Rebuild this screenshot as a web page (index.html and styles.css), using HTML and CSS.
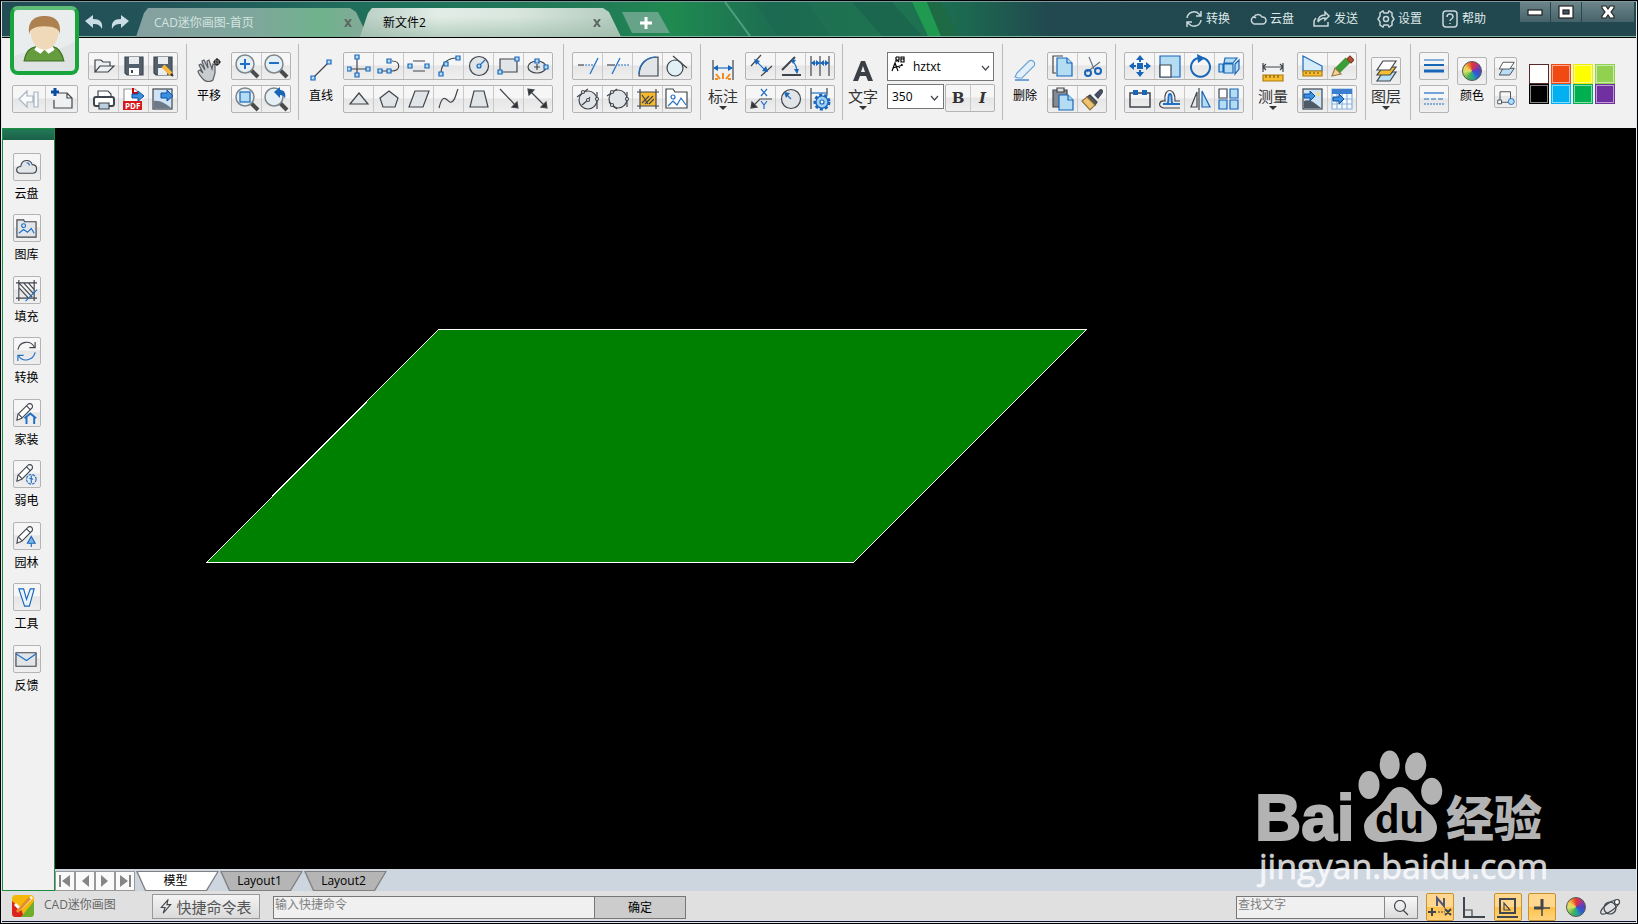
FILE: index.html
```html
<!DOCTYPE html>
<html lang="zh-CN">
<head>
<meta charset="utf-8">
<title>CAD迷你画图</title>
<link rel="stylesheet" href="styles.css">
</head>
<body>
<div class="window">
<header class="titlebar">
  <svg class="streaks" viewBox="0 0 1634 35" preserveAspectRatio="none" aria-hidden="true">
    <path d="M723 0L748 35" stroke="#4f9f7d" stroke-width="2"/>
    <path d="M752 0h52l24 35h-52z" fill="#1b6350" opacity=".3"/>
    <path d="M850 0h40l30 35h-40z" fill="#17554c" opacity=".4"/>
    <path d="M910 0h15l14 35h-13z" fill="#1f9a50"/>
    <path d="M925 0h14l17 35h-17z" fill="#1d6a45"/>
  </svg>
  <div class="history">
    <button aria-label="撤销"><svg viewBox="0 0 18 16"><path d="M0 7L8 1v4c7 0 10 3 9 10-2-4-4-5-9-5v4z"/></svg></button>
    <button aria-label="重做"><svg viewBox="0 0 18 16"><path d="M18 7L10 1v4C3 5 0 8 1 15c2-4 4-5 9-5v4z"/></svg></button>
  </div>
  <div class="doc-tabs">
    <div class="doc-tab home"><span>CAD迷你画图-首页</span><button aria-label="关闭"><svg viewBox="0 0 8 8"><path d="M1 0L7 8M7 0L1 8"/></svg></button></div>
    <div class="doc-tab active"><span>新文件2</span><button aria-label="关闭"><svg viewBox="0 0 8 8"><path d="M1 0L7 8M7 0L1 8"/></svg></button></div>
    <button class="new-tab" aria-label="新建标签"><svg viewBox="0 0 12 12"><path d="M6 0v12M0 6h12"/></svg></button>
  </div>
  <nav class="menu">
    <button><svg viewBox="0 0 18 18"><path d="M2 8a7 7 0 0 1 12-4l2 2M16 1v5h-5M16 10a7 7 0 0 1-12 4l-2-2M2 17v-5h5"/></svg>转换</button>
    <button><svg viewBox="0 0 18 18"><path d="M5 14a4 4 0 0 1-1-7c1 0 2 0 3 1M5 7a4.500 4.500 0 0 1 8 0 3.500 3.500 0 0 1 1 7H5"/></svg>云盘</button>
    <button><svg viewBox="0 0 18 18"><path d="M3 8c-1 1-2 2-2 4v4h14v-4M5 12c0-5 3-7 7-7V2l4 4-4 4V8c-3 0-5 1-7 4"/></svg>发送</button>
    <button><svg viewBox="0 0 18 18"><path d="M6 1l1 2h4l1-2 3 2v3l2 3-2 3v3l-3 2-1-2H7l-1 2-3-2v-3L1 9l2-3V3z"/><circle cx="9" cy="9" r="2.500"/></svg>设置</button>
    <button><svg viewBox="0 0 18 18"><rect x="2" y="1" width="14" height="16" rx="3"/><path d="M6 7c0-4 6-4 6 0 0 2-3 2-3 4M9 13v1"/></svg>帮助</button>
  </nav>
  <div class="win-btns">
    <button aria-label="最小化"><svg viewBox="0 0 18 14"><rect x="2" y="5" width="14" height="5" fill="#fff" stroke="#222"/></svg></button>
    <button aria-label="最大化"><svg viewBox="0 0 18 14"><rect x="2" y="1" width="14" height="12" fill="#fff" stroke="#222"/><rect x="6" y="5" width="6" height="4" fill="#456" stroke="#222"/></svg></button>
    <button class="close" aria-label="关闭窗口"><svg viewBox="0 0 18 14"><path d="M3 1h4l2 3 2-3h4v2l-3 4 3 4v2h-4l-2-3-2 3H3v-2l3-4-3-4z" fill="#fff" stroke="#222"/></svg></button>
  </div>
</header>

<div class="toolbar">
  <section class="start">
    <div class="group wide"><button aria-label="后退"><svg viewBox="0 0 24 24"><path class="pale" d="M2 12l8-8v5h6v6h-6v5zM17 5h4v15h-4z"/></svg></button><button aria-label="新建"><svg viewBox="0 0 24 24"><path class="s" d="M9 6h8l5 5v10H4v-8M17 6v5h5"/><path d="M5 1v8M1 5h8" stroke="#0a4da0" stroke-width="3"/></svg></button></div>
  </section>
  <section class="rows">
    <div class="group"><button aria-label="打开"><svg viewBox="0 0 24 24"><path class="s" d="M3 18V6h6l2 2h7v4M3 18l5-6h14l-6 6z"/></svg></button><button aria-label="保存"><svg viewBox="0 0 24 24"><path d="M3 3h18v18H5l-2-2z" fill="#53606e"/><path d="M7 3h10v7H7z" fill="#e9edf0" stroke="none"/><path d="M7 14h10v7H7z" fill="#fff" stroke="none"/><path d="M10 16v3" stroke-width="2"/></svg></button><button aria-label="另存为"><svg viewBox="0 0 24 24"><path d="M3 3h18v18H5l-2-2z" fill="#53606e"/><path d="M7 3h10v7H7zM7 14h9v7H7z" fill="#e9edf0" stroke="none"/><path d="M12 12l8 8" stroke="#f6b53b" stroke-width="4"/><path d="M20 20l2 2" stroke="#333" stroke-width="2"/></svg></button></div>
    <div class="group"><button aria-label="打印"><svg viewBox="0 0 24 24"><path class="w" d="M6 11V4h10l3 3v4"/><rect x="2" y="10" width="20" height="9" rx="2" fill="#fff" stroke-width="2"/><path d="M7 16h10v6H7z" fill="#bcd0e0"/></svg></button><button aria-label="导出PDF"><svg viewBox="0 0 24 24"><path class="w" d="M2 14V2h11l4 4v8" stroke="#999"/><path d="M11 1v5h5" stroke="#c00" stroke-width="2"/><path class="arrow" d="M10 7h6V4l6 5-6 5v-3h-6z"/><rect x="1" y="14" width="19" height="9" fill="#d8171d" stroke="none"/><text x="3" y="22" font-size="8" font-weight="700" fill="#fff">PDF</text></svg></button><button aria-label="导出图片"><svg viewBox="0 0 24 24"><rect x="2" y="2" width="19" height="20" fill="#cfe5f7"/><path d="M3 14c6-1 12 3 17 7H3z" fill="#6d7986" stroke="none"/><path class="arrow" d="M10 6h6V3l6 6-6 5v-3h-6z"/></svg></button></div>
  </section>
  <i class="sep"></i>
  <button class="tool"><svg viewBox="0 0 24 24"><path d="M7 22c-3-3-6-7-6-9l2-1 3 3-4-8 2-1 4 6-3-9 2-1 4 8-1-7 2-1 3 9 1-5 2 1v8l-2 7c-2 2-7 2-9 0z" fill="#c9cccf" stroke="#5a5f66"/><path d="M20 0v8M16 4h8" stroke="#222"/><circle cx="20" cy="4" r="2.500" stroke="#222"/></svg><span>平移</span></button>
  <section class="rows tight">
    <div class="group"><button aria-label="放大"><svg class="mag" viewBox="0 0 26 26"><path class="hd" d="M17 17l7 7"/><circle cx="11" cy="11" r="9"/><path class="bl" d="M11 6v10M6 11h10"/></svg></button><button aria-label="缩小"><svg class="mag" viewBox="0 0 26 26"><path class="hd" d="M17 17l7 7"/><circle cx="11" cy="11" r="9"/><path class="bl" d="M6 10h10"/></svg></button></div>
    <div class="group"><button aria-label="窗口缩放"><svg class="mag" viewBox="0 0 26 26"><path class="hd" d="M17 17l7 7"/><circle cx="11" cy="11" r="9"/><rect x="6" y="6" width="10" height="10" class="n"/></svg></button><button aria-label="上一视图"><svg class="mag" viewBox="0 0 26 26"><path class="hd" d="M17 17l7 7"/><circle cx="11" cy="11" r="9"/><path d="M11 6l6-5v3c5 0 6 4 5 9-1-3-2-4-5-4v3z" fill="#1866ba" stroke="none"/></svg></button></div>
  </section>
  <i class="sep"></i>
  <button class="tool"><svg viewBox="0 0 24 24"><path d="M5 19L19 5"/><path class="n" d="M2 18h4v4H2zM18 2h4v4h-4z"/></svg><span>直线</span></button>
  <section class="rows loose">
    <div class="group"><button aria-label="多线"><svg viewBox="0 0 24 24"><path d="M10 4v16M3 15h19"/><path class="n" d="M8 1h4v4H8zM0 13h4v4H0zM19 13h4v4h-4zM8 19h4v4H8z"/></svg></button><button aria-label="多段线"><svg viewBox="0 0 24 24"><path d="M3 17h12c9 0 9-10 0-10"/><path class="n" d="M1 15h4v4H1zM10 15h4v4h-4zM10 5h4v4h-4z"/></svg></button><button aria-label="双线"><svg viewBox="0 0 24 24"><path d="M6 7h12M6 17h12"/><path class="n" d="M1 10h4v4H1zM18 10h4v4h-4z"/></svg></button><button aria-label="圆弧"><svg viewBox="0 0 24 24"><path d="M4 20C4 10 10 4 20 4"/><path class="n" d="M2 18h4v4H2zM7 8h4v4H7zM19 2h4v4h-4z"/></svg></button><button aria-label="圆"><svg viewBox="0 0 24 24"><circle class="f" cx="12" cy="12" r="9.500"/><path class="bl" d="M12 12l6-6"/><circle class="n" cx="12" cy="12" r="2"/></svg></button><button aria-label="矩形"><svg viewBox="0 0 24 24"><path class="f" d="M3 5h17v13H3z"/><path class="n" d="M1 16h4v4H1zM18 3h4v4h-4z"/></svg></button><button aria-label="椭圆"><svg viewBox="0 0 24 24"><ellipse class="f" cx="11" cy="13" rx="9" ry="6"/><path d="M11 10v6M8 13h6"/><path class="n" d="M9 5h4v4H9zM18 11h4v4h-4z"/></svg></button></div>
    <div class="group"><button aria-label="三角形"><svg viewBox="0 0 24 24"><path class="f" d="M12 6l9 11H3z"/></svg></button><button aria-label="多边形"><svg viewBox="0 0 24 24"><path class="f" d="M12 4l9 7-3 9H6l-3-9z"/></svg></button><button aria-label="平行四边形"><svg viewBox="0 0 24 24"><path class="f" d="M8 4h14l-6 16H2z"/></svg></button><button aria-label="样条曲线"><svg viewBox="0 0 24 24"><path d="M2 21c2-8 4-11 7-9s4 5 7 2 3-8 5-12"/></svg></button><button aria-label="梯形"><svg viewBox="0 0 24 24"><path class="f" d="M7 4h10l4 16H3z"/></svg></button><button aria-label="箭头"><svg viewBox="0 0 24 24"><path d="M3 2l17 18"/><path d="M21 21l-6-1 5-5z" fill="#333"/></svg></button><button aria-label="双向箭头"><svg viewBox="0 0 24 24"><path d="M4 4l16 16"/><path d="M2 2l6 1-5 5zM21 21l-6-1 5-5z" fill="#333"/></svg></button></div>
  </section>
  <i class="sep"></i>
  <section class="rows gap-before">
    <div class="group"><button aria-label="修剪"><svg viewBox="0 0 24 24"><path d="M2 11h6"/><path class="bl" d="M9 11h9" stroke-dasharray="2 1"/><path class="bl" d="M22 4l-8 16"/></svg></button><button aria-label="延伸"><svg viewBox="0 0 24 24"><path d="M1 11h8"/><path class="bl" d="M12 11h12" stroke-dasharray="2 1"/><path class="bl" d="M14 4L6 20"/></svg></button><button aria-label="圆角"><svg viewBox="0 0 24 24"><path class="f" d="M3 22C3 10 10 3 22 3v19z"/><path class="bl" d="M3 20C3 10 10 3 20 3"/></svg></button><button aria-label="相切"><svg viewBox="0 0 24 24"><circle cx="10" cy="14" r="8" fill="#e0f0f4"/><path d="M8 2l14 12"/></svg></button></div>
    <div class="group"><button aria-label="圆心标注"><svg viewBox="0 0 24 24"><circle class="f" cx="12" cy="13" r="9"/><path d="M1 10L12 2M21 5v17M6 18l6-5 2-3"/><circle class="w" cx="7" cy="5" r="1.500"/><circle class="w" cx="12" cy="13" r="1.500"/><circle class="w" cx="21" cy="12" r="1.500"/></svg></button><button aria-label="三切圆"><svg viewBox="0 0 24 24"><circle class="f" cx="12" cy="12" r="9"/><path d="M1 9l10-7M21 5v15M3 15l8 7"/><circle class="w" cx="6" cy="5" r="1.500"/><circle class="w" cx="21" cy="12" r="1.500"/><circle class="w" cx="6" cy="18" r="1.500"/></svg></button><button aria-label="填充图案"><svg viewBox="0 0 24 24"><rect x="4" y="5" width="16" height="14" fill="#f7b92e" stroke="none"/><path d="M1 5h22M1 19h22M4 2v20M20 2v20M6 16l7-7M9 17l8-8M13 17l5-5M6 8l6 9"/></svg></button><button aria-label="插入图片"><svg viewBox="0 0 24 24"><path class="w" d="M1 21V2h7l2 3h12v16z"/><circle class="bl" cx="8" cy="10" r="2"/><path class="bl" d="M3 19l5-5 4 4 4-7 5 7"/></svg></button></div>
  </section>
  <i class="sep"></i>
  <button class="tool big"><svg viewBox="0 0 24 24"><path d="M2 2v20M22 2v20"/><path d="M3 10h18" class="bl"/><path d="M2 10l5-3v6zM22 10l-5-3v6z" fill="#1866ba" stroke="none"/><path d="M12 21v-6M9 21l-4-5M15 21l4-5M7 21H4M17 21h3" stroke="#f28a1d" stroke-width="2"/></svg><span>标注</span></button>
  <section class="rows tight">
    <div class="group"><button aria-label="对齐标注"><svg viewBox="0 0 24 24"><path d="M2 12L12 1M12 22l11-10"/><path class="bl" d="M8 8l8 8"/><path d="M5 5l6 2-4 4zM19 18l-6-1 4-5z" fill="#1866ba" stroke="none"/></svg></button><button aria-label="角度标注"><svg viewBox="0 0 24 24"><path d="M3 21h19M3 16L16 3" stroke-width="2"/><path class="bl" d="M13 7c4 3 5 7 5 12"/><path d="M12 5l5 1-3 4zM18 20l-3-5h5z" fill="#1866ba" stroke="none"/></svg></button><button aria-label="连续标注"><svg viewBox="0 0 24 24"><path d="M3 2v20M12 2v20M21 2v20"/><path class="bl" d="M3 9h18"/><path d="M3 9l4-3v6zM12 9L8 6v6zM12 9l4-3v6zM21 9l-4-3v6z" fill="#1866ba" stroke="none"/></svg></button></div>
    <div class="group"><button aria-label="坐标标注"><svg viewBox="0 0 24 24"><path d="M4 19l7-7h12"/><path d="M2 21l1-6 5 5z" fill="#333"/><path class="bl" d="M12 2l6 7M18 2l-6 7M12 14l3 4 3-4M15 18v4"/></svg></button><button aria-label="半径标注"><svg viewBox="0 0 24 24"><circle class="f" cx="12" cy="12" r="9.500"/><path class="bl" d="M12 12L7 7"/><path d="M5 5l6 1-4 5z" fill="#1866ba" stroke="none"/></svg></button><button aria-label="标注设置"><svg viewBox="0 0 24 24"><path d="M3 1v21M19 1v7"/><path class="bl" d="M3 6h16"/><circle cx="14" cy="15" r="7" fill="#9fd0f2" stroke="#1866ba" stroke-width="3" stroke-dasharray="3 2"/><circle cx="14" cy="15" r="6" fill="#9fd0f2" stroke="#1866ba"/><circle cx="14" cy="15" r="2" fill="#fff" stroke="#1866ba"/></svg></button></div>
  </section>
  <i class="sep"></i>
  <button class="tool big text-tool"><svg viewBox="0 0 24 24"><path d="M2 23L10 3h4l8 20h-5l-2-5H9l-2 5zM10 14h4l-2-6z" fill="#3b4046" stroke="none"/></svg><span>文字</span></button>
  <section class="fonts">
    <div class="pick"><svg class="glyph" viewBox="0 0 16 16"><path d="M1 15l3-8 3 8M2 12l10-3M5 1v5M5 1h3v3H5M8 6L6 4M10 1v5h3V1zM10 3h3M11 8l-3 4"/></svg><select aria-label="字体"><option>hztxt</option></select><svg class="chev" viewBox="0 0 9 6"><path d="M1 1l3.500 4L8 1"/></svg></div>
    <div class="row">
      <div class="pick small"><select aria-label="字号"><option>350</option></select><svg class="chev" viewBox="0 0 9 6"><path d="M1 1l3.500 4L8 1"/></svg></div>
      <div class="group style"><button class="bold">B</button><button class="ital">I</button></div>
    </div>
  </section>
  <i class="sep"></i>
  <button class="tool"><svg viewBox="0 0 24 24"><path d="M4 15L16 3c3-2 7 1 5 5L9 20H5l-3-1z" fill="#e3effa" stroke="#6ea4d3"/><path class="bl" d="M2 22h14"/></svg><span>删除</span></button>
  <section class="rows">
    <div class="group"><button aria-label="复制"><svg viewBox="0 0 24 24"><path d="M12 2H2v17h3"/><path class="n" d="M6 4h10l5 5v13H6z"/><path class="n" d="M16 4v5h5"/></svg></button><button aria-label="剪切"><svg viewBox="0 0 24 24"><path d="M9 3l5 12M20 8L7 18" stroke="#6a7480"/><circle cx="8" cy="19" r="3" stroke="#1866ba" stroke-width="2"/><circle cx="18" cy="17" r="3" stroke="#1866ba" stroke-width="2"/></svg></button></div>
    <div class="group"><button aria-label="粘贴"><svg viewBox="0 0 24 24"><path d="M2 3h14v17H2z" fill="#858b90"/><path d="M6 1h7v4H6z" fill="#ddd"/><path class="n" d="M8 8h9l5 5v10H8z"/><path class="n" d="M17 8v5h5"/></svg></button><button aria-label="格式刷"><svg viewBox="0 0 24 24"><path d="M15 8l5-5c2-1 3 1 2 3l-4 5z" fill="#435072"/><path d="M10 8l7 7-2 3-8-8z" fill="#555"/><path d="M7 10l8 8-5 5-8-9z" fill="#efc471" stroke="#907040"/></svg></button></div>
  </section>
  <i class="sep"></i>
  <section class="rows gap-before">
    <div class="group"><button aria-label="移动"><svg viewBox="0 0 24 24"><path d="M12 1l4 5H8zM12 23l4-5H8zM1 12l5-4v8zM23 12l-5-4v8zM9 9h6v6H9zM11 6h2v2h-2zM11 16h2v2h-2zM6 11h2v2H6zM16 11h2v2h-2z" fill="#1866ba" stroke="none"/></svg></button><button aria-label="缩放"><svg viewBox="0 0 24 24"><path class="n" d="M2 2h20v21H2z"/><path class="w" d="M2 11h11v12H2z"/></svg></button><button aria-label="旋转"><svg viewBox="0 0 24 24"><path d="M15 4a9.500 9.500 0 1 1-5 0" stroke="#1866ba" stroke-width="2"/><path d="M9 0l8 4-7 5z" fill="#1866ba" stroke="none"/></svg></button><button aria-label="三维"><svg viewBox="0 0 24 24"><path class="n" d="M7 10h9v9H7zM8 4h12l-4 5H7zM18 10l4-4v9l-4 5zM2 10h4v8H2z"/></svg></button></div>
    <div class="group"><button aria-label="打断"><svg viewBox="0 0 24 24"><path d="M5 6H2v14h20V6h-3M10 6h4" stroke-width="1.500"/><path d="M5 3h5v5H5zM14 3h5v5h-5z" fill="#1866ba" stroke="none"/></svg></button><button aria-label="偏移"><svg viewBox="0 0 24 24"><path d="M22 21H6c-7-1-5-8 1-7-2-14 11-14 10 0h5"/><path class="bl" d="M22 17H5M9 17c3-2 0-10 3-10s0 8 3 10" stroke-width="2"/></svg></button><button aria-label="镜像"><svg viewBox="0 0 24 24"><path d="M9 5v15H3z"/><path class="n" d="M14 4l8 16h-8z"/><path d="M11 1v22"/></svg></button><button aria-label="阵列"><svg viewBox="0 0 24 24"><path class="w" d="M2 2h8v9H2z"/><path class="n" d="M13 2h8v9h-8zM2 13h8v9H2zM13 13h8v9h-8z"/></svg></button></div>
  </section>
  <i class="sep"></i>
  <button class="tool big text-tool"><svg viewBox="0 0 24 24"><path d="M2 5v9M22 5v9M2 9h20M5 6L2 9l3 3M19 6l3 3-3 3"/><path d="M2 17h20v6H2z" fill="#f7bf2e" stroke="#b07a10"/><path d="M5 17v3M9 17v3M13 17v3M17 17v3" stroke="#805a10"/></svg><span>测量</span></button>
  <section class="rows">
    <div class="group"><button aria-label="面积"><svg viewBox="0 0 24 24"><path d="M2 2l19 10v5H2z" fill="#d6ebf9" stroke="#1866ba"/><path d="M2 17h19v5H2z" fill="#f7bf2e" stroke="#b07a10"/><path d="M5 18v2M9 18v2M13 18v2M17 18v2" stroke="#805a10"/></svg></button><button aria-label="标记"><svg viewBox="0 0 24 24"><path d="M7 17L18 6" stroke="#3c9c35" stroke-width="7"/><path d="M2 22l3-8 6 6z" fill="#f4d39a" stroke="#9a7a40"/><path d="M17 5l3-3 4 4-3 3z" fill="#b3543a" stroke="#8a3a22"/></svg></button></div>
    <div class="group"><button aria-label="插入图像"><svg viewBox="0 0 24 24"><rect x="2" y="2" width="19" height="20" fill="#cfe5f7"/><circle cx="17" cy="7" r="2" fill="#f6de8c" stroke="none"/><path d="M3 14c6-3 12 3 17 7H3z" fill="#4f5965" stroke="none"/><path class="arrow" d="M3 7h6V4l5 5-5 5v-3H3z"/></svg></button><button aria-label="插入表格"><svg viewBox="0 0 24 24"><path d="M2 2h20v20H2z" fill="#f5faff" stroke="#8ab2dc"/><path d="M2 2h20v5H2z" fill="#3c7fd0" stroke="none"/><path d="M2 12h20M2 17h20M7 7v15M12 7v15M17 7v15" stroke="#8ab2dc"/><path class="arrow" d="M3 10h6V7l5 5-5 5v-3H3z"/></svg></button></div>
  </section>
  <i class="sep"></i>
  <button class="tool big boxed text-tool"><b><svg viewBox="0 0 24 24"><path d="M9 13h13l-6 9H3z" fill="#b9dff5"/><path d="M9 8h13l-6 8H3z" fill="#f7bf2e"/><path class="w" d="M9 2h13l-6 9H3z"/></svg></b><span>图层</span></button>
  <i class="sep"></i>
  <section class="rows gap-before">
    <div class="group"><button aria-label="线宽"><svg viewBox="0 0 24 24"><path d="M2 6h20" stroke="#1866ba" stroke-width="1"/><path d="M2 11h20" stroke="#1866ba" stroke-width="2"/><path d="M2 17h20" stroke="#1866ba" stroke-width="3"/></svg></button></div>
    <div class="group"><button aria-label="线型"><svg viewBox="0 0 24 24"><path d="M2 6h20" class="bl"/><path d="M2 12h20" class="bl" stroke-dasharray="5 2"/><path d="M2 17h20" class="bl" stroke-dasharray="2 1"/></svg></button></div>
  </section>
  <button class="tool boxed colour"><b><i class="wheel"></i></b><span>颜色</span></button>
  <section class="minis">
    <div class="group"><button aria-label="图层匹配"><svg viewBox="0 0 24 24"><path d="M8 11h15l-6 9H3z" fill="#b9dff5"/><path class="w" d="M8 3h15l-6 9H3z"/></svg></button></div>
    <div class="group"><button aria-label="对象属性"><svg viewBox="0 0 24 24"><path d="M4 16V5h14v10M5 19h10"/><path class="w" d="M1 16h5v5H1z"/><circle class="n" cx="19" cy="18" r="4"/></svg></button></div>
  </section>
  <div class="palette">
    <button class="c-white" aria-label="白"></button><button class="c-red" aria-label="红"></button><button class="c-yellow" aria-label="黄"></button><button class="c-lime" aria-label="浅绿"></button>
    <button class="c-black" aria-label="黑"></button><button class="c-blue" aria-label="蓝"></button><button class="c-green" aria-label="绿"></button><button class="c-purple" aria-label="紫"></button>
  </div>
</div>

<button class="avatar" aria-label="用户"><svg viewBox="0 0 60 60"><path d="M0 0h60v30C42 46 16 36 0 46z" fill="#fff" opacity=".35"/><path d="M10 50c2-10 6-13 12-14h16c6 1 9 5 11 14z" fill="#659c3d" stroke="#3f7426"/><path d="M20 39l3-5h14l3 5-6 4-4-4-4 4z" fill="#fff"/><path d="M16 18c0-8 28-8 28 0 0 12-5 21-14 21S16 30 16 18z" fill="#efd9b8"/><path d="M15 24C13 11 20 6 30 6s17 5 15 18c0-5-5-8-15-8-10 0-15 3-15 8z" fill="#ad8150"/></svg></button>

<main class="workspace">
  <aside class="sidebar">
    <div class="side-head"></div>
    <ul>
      <li><button><b><svg viewBox="0 0 24 24"><path class="f" d="M5 18c-5-1-4-7 1-7 1-8 10-8 12-2 6 0 6 9 0 9z"/><path class="bl" d="M12 7c2 0 3 1 3 3"/></svg></b><span>云盘</span></button></li>
      <li><button><b><svg viewBox="0 0 24 24"><path class="f" d="M2 21V3h7l1 2h12v16z"/><circle class="bl" cx="9" cy="9" r="2"/><path class="bl" d="M4 17l5-4 4 3 4-4 3 5"/></svg></b><span>图库</span></button></li>
      <li><button><b><svg viewBox="0 0 24 24"><path d="M1 4h22M1 20h22M4 1v22M20 1v22M4 9l10 11M4 4l14 15M9 4l11 12M14 4l6 7"/><path class="bl" d="M11 23L23 11"/></svg></b><span>填充</span></button></li>
      <li><button><b><svg viewBox="0 0 24 24"><path d="M3 10c2-9 13-10 17-3M21 2v6h-6"/><path class="bl" d="M21 13c-2 9-13 10-17 4M3 22v-6h6"/></svg></b><span>转换</span></button></li>
      <li><button><b><svg viewBox="0 0 24 24"><path class="w" d="M3 13L14 2c3-1 5 1 4 4L7 17l-5 2zM12 4l4 4M4 13l3 3"/><path class="bl" d="M10 17l6-5 6 5M12 16v7M20 16v7" stroke-width="2"/></svg></b><span>家装</span></button></li>
      <li><button><b><svg viewBox="0 0 24 24"><path class="w" d="M3 13L14 2c3-1 5 1 4 4L7 17l-5 2zM12 4l4 4M4 13l3 3"/><circle class="bl" cx="17" cy="17" r="5" stroke-dasharray="3 1"/><path class="bl" d="M17 13v8M15 16l4 1"/></svg></b><span>弱电</span></button></li>
      <li><button><b><svg viewBox="0 0 24 24"><path class="w" d="M3 13L14 2c3-1 5 1 4 4L7 17l-5 2zM12 4l4 4M4 13l3 3"/><path d="M17 12l4 7h-8z" fill="#7db8ea" stroke="#1866ba"/><path class="bl" d="M17 19v4"/></svg></b><span>园林</span></button></li>
      <li><button><b><svg viewBox="0 0 24 24"><path d="M4 3h5l3 11 4-11h4l-5 18h-5z" fill="#eaf4fc" stroke="#1866ba"/></svg></b><span>工具</span></button></li>
      <li><button><b><svg viewBox="0 0 24 24"><path class="f" d="M1 5h21v14H1z"/><path class="bl" d="M1 6l11 7 10-7"/></svg></b><span>反馈</span></button></li>
    </ul>
  </aside>
  <div class="sheet">
    <div class="canvas">
      <svg width="1100" height="500" viewBox="0 0 1100 500" role="img" aria-label="平行四边形" shape-rendering="crispEdges">
        <path d="M383.500 201.500H1031.500L798.500 434.500H151.500Z" fill="#008000" stroke="#fff" stroke-width="1"/>
      </svg>
    </div>
    <div class="layouts">
      <div class="pager">
        <button aria-label="第一个"><svg viewBox="0 0 12 12"><path d="M0 0h2v12H0zM11 0v12L3 6z"/></svg></button><button aria-label="上一个"><svg viewBox="0 0 12 12"><path d="M10 0v12L3 6z"/></svg></button><button aria-label="下一个"><svg viewBox="0 0 12 12"><path d="M2 0v12l7-6z"/></svg></button><button aria-label="最后一个"><svg viewBox="0 0 12 12"><path d="M1 0v12l8-6zM10 0h2v12h-2z"/></svg></button>
      </div>
      <button class="layout current"><span>模型</span></button>
      <button class="layout"><span>Layout1</span></button>
      <button class="layout"><span>Layout2</span></button>
    </div>
  </div>
  <svg class="mark" width="300" height="146" viewBox="0 0 300 146" aria-label="Baidu经验 jingyan.baidu.com">
    <g fill="#b3b3b3">
      <text x="0" y="95" class="bai">Bai</text>
      <ellipse cx="114" cy="40" rx="10.500" ry="14"/><ellipse cx="134.700" cy="19.700" rx="10" ry="14.300"/><ellipse cx="160.700" cy="21.300" rx="10.500" ry="14" transform="rotate(8 160 21)"/><ellipse cx="176.700" cy="46.300" rx="10.500" ry="13.500"/>
      <path d="M145 42c8 0 12 7 17 14 7 9 19 14 20 26 0 10-7 15-17 15-7 0-13-2-20-2s-12 2-19 2c-10 0-17-5-17-16 1-11 13-15 20-25 5-7 8-14 16-14z"/>
      <text x="191" y="91" class="exp">经验</text>
    </g>
    <text x="120" y="88" class="du">du</text>
    <text x="4" y="134" class="url">jingyan.baidu.com</text>
  </svg>
</main>

<footer class="status">
  <div class="brand"><svg viewBox="0 0 24 24"><rect x="1" y="1" width="22" height="22" rx="4" fill="#f5b80a"/><path d="M1 7l9 8 3 8H5c-3 0-4-1-4-4z" fill="#d9251d"/><path d="M23 7v12c0 3-1 4-4 4h-9z" fill="#6fae2c"/><path d="M4 10l5 5L21 3" fill="none" stroke="#fff" stroke-width="3"/><path d="M6 18L19 4" stroke="#e58c2b" stroke-width="3"/></svg><span>CAD迷你画图</span></div>
  <button class="cmd-list"><svg viewBox="0 0 12 16"><path d="M8 1L1 9h4l-2 6 8-9H7z"/></svg>快捷命令表</button>
  <form class="cmd"><input type="text" aria-label="快捷命令" placeholder="输入快捷命令"><button type="button">确定</button></form>
  <form class="find"><input type="text" aria-label="查找文字" placeholder="查找文字"><button type="button" aria-label="查找"><svg viewBox="0 0 16 16"><circle cx="7" cy="6" r="5.500"/><path d="M10 10l5 5"/></svg></button></form>
  <div class="modes">
    <button class="on" aria-label="捕捉"><svg viewBox="0 0 26 26"><path d="M10 12V4l7 8V4" stroke="#557" stroke-width="2"/><path d="M1 18h8M5 14v8M18 15l6 6M24 15l-6 6" stroke-width="2"/><path d="M11 18h7" stroke-dasharray="2 1"/></svg></button>
    <button aria-label="正交"><svg viewBox="0 0 26 26"><path d="M3 3v20h21" stroke-width="2"/><path d="M4 16h7v7"/></svg></button>
    <button class="on" aria-label="线宽显示"><svg viewBox="0 0 26 26"><path d="M5 5h15v14H5z" stroke-width="2"/><path d="M2 23h21" stroke-width="2"/><path d="M9 9v7h6z"/></svg></button>
    <button class="on" aria-label="十字光标"><svg viewBox="0 0 26 26"><path d="M13 5v17M13 14h8" stroke-width="1.500"/><path d="M13 5v9H5" stroke-width="3"/></svg></button>
    <button aria-label="背景颜色"><i class="wheel"></i></button>
    <button aria-label="浏览"><svg viewBox="0 0 26 26"><circle cx="13" cy="14" r="6"/><ellipse cx="13" cy="13" rx="11" ry="4" transform="rotate(-35 13 13)"/><circle class="w" cx="20" cy="8" r="2.500"/></svg></button>
  </div>
</footer>
</div>
</body>
</html>
```

FILE: styles.css
```css
* { box-sizing: border-box; }
body {
  margin: 0;
  background: #000;
  color: #000;
  font: 12px/20px "Open Sans", "Noto Sans CJK SC", sans-serif;
}
button, input, select { font: inherit; color: inherit; }
button { margin: 0; padding: 0; border: 0; background: none; }
svg { display: block; fill: none; stroke: #40464d; stroke-width: 1.2; }
svg text { stroke: none; }

.window {
  position: relative;
  display: flex;
  flex-direction: column;
  height: 100vh;
  border: 1px solid #000;
  overflow: hidden;
}
.window::after {
  content: "";
  position: absolute;
  inset: 0;
  border: 1px solid #dfe6ea;
  border-top-color: #7e9a9e;
  pointer-events: none;
}

/* title bar */
.titlebar {
  position: relative;
  display: flex;
  flex: none;
  height: 37px;
  padding: 1px 3px 0 84px;
  border-bottom: 1px solid #000;
  box-shadow: inset 0 -1px #84b59f;
  background: linear-gradient(90deg, #234c55 0, #22555a 10%, #1f6f5b 22%, #217c56 37%, #1f8a50 41%, #1d6e52 47%, #1e7451 55%, #1c6850 59%, #21494f 64%, #22474f 100%);
}
.streaks { position: absolute; inset: 1px; width: calc(100% - 2px); height: 34px; stroke: none; }
.history { position: relative; display: flex; gap: 8px; align-items: center; width: 51px; height: 39px; }
.history svg { width: 18px; height: 16px; fill: #cbdde4; stroke: none; }
.doc-tabs { position: relative; display: flex; align-items: flex-end; }
.doc-tab {
  display: flex;
  justify-content: space-between;
  align-items: center;
  height: 29px;
  clip-path: polygon(0 100%, 8px 5px, 12px 0, calc(100% - 18px) 0, calc(100% - 12px) 4px, 100% 100%);
}
.home { width: 232px; padding: 0 16px 0 18px; color: #d5e3e0; background: linear-gradient(90deg, #85a0a0, #7fa79c 50%, #6fb38c 80%, #85a89a); }
.active { width: 261px; margin-left: -8px; padding: 0 20px 0 23px; background: linear-gradient(#fff0 30%, #8fb39d88), linear-gradient(90deg, #b9cec4, #e2ede7 30%, #d8e6de 60%, #b4cbbf); }
.doc-tab svg { width: 8px; height: 8px; stroke: #5d6664; stroke-width: 2; }
.new-tab {
  width: 48px;
  height: 21px;
  margin: 0 0 4px 1px;
  padding-left: 18px;
  clip-path: polygon(0 0, 36px 0, 100% 100%, 10px 100%);
  background: #67a389;
}
.new-tab svg { width: 12px; height: 12px; stroke: #fff; stroke-width: 3; }
.menu { position: relative; display: flex; gap: 19px; margin-left: auto; height: 33px; color: #dfe8ea; }
.menu button { display: flex; align-items: center; gap: 3px; }
.menu svg { width: 18px; height: 18px; stroke: #c8d6da; stroke-width: 1.5; }
.win-btns { position: relative; display: flex; gap: 1px; margin-left: 34px; height: 20px; }
.win-btns button { display: grid; place-items: center; width: 30px; background: linear-gradient(#6d858a, #46626a); }
.win-btns .close { width: 52px; }
.win-btns svg { width: 18px; height: 14px; }

/* toolbar */
.toolbar {
  display: flex;
  flex: none;
  height: 90px;
  padding: 6px 17px 8px 11px;
  background: #f1f1f1;
}
.toolbar section { flex: none; padding-top: 8px; }
.toolbar .start { padding-top: 41px; margin-right: 10px; }
.rows { display: flex; flex-direction: column; gap: 5px; margin-right: 8px; }
.tight { margin-right: 7px; }
.loose { margin-right: 10px; }
.gap-before { margin-left: 8px; }
.group {
  display: flex;
  width: fit-content;
  height: 28px;
  border: 1px solid #b4b4b4;
  border-radius: 2px;
  background: linear-gradient(#f6f6f6 45%, #e6e6e6 50%, #efefef);
}
.group button { display: grid; place-items: center; width: 30px; height: 26px; }
.group button:first-child { width: 29px; }
.group button:last-child { width: 29px; }
.group button:only-child { width: 28px; }
.group button + button { border-left: 1px solid #c9c9c9; }
.group.wide button { width: 32px; }
.group svg { width: 24px; height: 24px; }
.group .mag { width: 26px; height: 26px; }
.sep { flex: none; width: 1px; height: 76px; background: #b9b9b9; }
.tool {
  display: flex;
  flex: none;
  flex-direction: column;
  align-items: center;
  width: 44px;
  padding-top: 14px;
}
.tool > svg { width: 24px; height: 24px; margin-bottom: 4px; }
.tool.big span { font-size: 15px; color: #333; }
.tool.big::after { content: ""; border: 4px solid #0000; border-top-color: #333; border-bottom: 0; }
.tool.text-tool { padding-right: 4px; }
.tool b, .sidebar b {
  display: grid;
  place-items: center;
  width: 30px;
  height: 28px;
  border: 1px solid #b4b4b4;
  border-radius: 2px;
  background: linear-gradient(#f6f6f6 45%, #e6e6e6 50%, #efefef);
}
.tool b svg { width: 24px; height: 24px; }
.tool.boxed { padding-top: 13px; }
.tool.boxed span { margin-top: 1px; }
.tool.colour { width: 30px; margin-right: 7px; }
.wheel {
  display: block;
  width: 20px;
  height: 20px;
  border: 1px solid #555;
  border-radius: 50%;
  background: conic-gradient(#e0352f, #c8326d 30deg, #5a3fc0 80deg, #2c5fd0 130deg, #28a39a 170deg, #49b34c 210deg, #d4e06a 265deg, #f0cf55 300deg, #e8772f 335deg, #e0352f);
}
.minis { display: flex; flex-direction: column; gap: 5px; margin-right: 12px; }
.toolbar .minis { padding-top: 13px; }
.minis .group { width: 23px; height: 23px; }
.minis .group button:only-child { width: 21px; height: 21px; }
.minis .group svg { width: 18px; height: 18px; }

.f { fill: #e2e5e8; }
.w { fill: #fff; }
.s { fill: #eef0f1; }
.pale { fill: #f8fafb; stroke: #aab6bf; }
.n { fill: #b4dcf3; stroke: #1866ba; }
.bl { stroke: #1f6fc4; }
.arrow { fill: #3d8fdf; stroke: #0d4f9f; stroke-width: 1; }
.mag circle { fill: #e4f0f5; stroke: #7e868d; stroke-width: 1.5; }
.mag .hd { stroke: #4a4a4a; stroke-width: 4; }
.mag .bl { stroke-width: 2; }

.fonts { display: flex; flex-direction: column; gap: 3px; width: 108px; margin-right: 7px; }
.pick { position: relative; height: 29px; }
.pick select {
  width: 107px;
  height: 100%;
  padding: 0 20px 0 25px;
  border: 1px solid #767676;
  border-radius: 0;
  background: #fff;
  appearance: none;
}
.pick.small { width: 57px; height: 25px; }
.pick.small select { width: 57px; padding: 0 16px 0 4px; }
.chev { position: absolute; right: 5px; top: 50%; width: 9px; height: 6px; margin-top: -2px; pointer-events: none; }
.glyph { position: absolute; left: 4px; top: 4px; width: 16px; height: 16px; stroke: #000; pointer-events: none; }
.row { display: flex; gap: 1px; }
.group.style { width: 50px; }
.group.style button { width: 24px; font: 700 15px/24px "DejaVu Serif", serif; color: #333; }
.group.style .ital { font-style: italic; }

.palette { display: grid; grid-template-columns: repeat(4, 20px); grid-auto-rows: 20px; column-gap: 2px; padding-top: 20px; }
.palette button { border: 1px solid #444; box-shadow: inset 0 0 0 1px #ffffff88; }
.palette .c-white { background: #fff; border-color: #5a2a2a; }
.palette .c-red { background: #f04a12; border-color: #f04a12; }
.palette .c-yellow { background: #ff0; border-color: #ee0; }
.palette .c-lime { background: #92d050; border-color: #92d050; }
.palette .c-black { background: #000; border-color: #000; }
.palette .c-blue { background: #00b0f0; border-color: #00b0f0; }
.palette .c-green { background: #00b050; border-color: #00b050; }
.palette .c-purple { background: #7030a0; border-color: #7030a0; }

.avatar {
  position: absolute;
  left: 9px;
  top: 5px;
  width: 69px;
  height: 69px;
  border: 4px solid #18a53c;
  border-color: #5fbd78 #18a53c #18a53c;
  border-radius: 8px;
  background: #dfe3e4;
  overflow: hidden;
}
.avatar svg { width: 61px; height: 61px; stroke: none; }

/* drawing area */
.workspace { position: relative; display: flex; flex: 1; min-height: 0; padding: 0 1px; background: #000; }
.sidebar { display: flex; flex: none; flex-direction: column; width: 53px; border: 1px solid #1a8f40; background: #f1f1f1; }
.side-head { height: 11px; background: linear-gradient(#227a56, #1a6048); }
.sidebar ul { display: grid; grid-auto-rows: 61px 62px; justify-content: center; margin: 0; padding: 13px 4px 0 0; list-style: none; }
.sidebar button { display: flex; flex-direction: column; align-items: center; gap: 3px; }
.sidebar b { width: 28px; }
.sidebar svg { width: 23px; height: 23px; }
.sheet { display: flex; flex: 1; flex-direction: column; min-width: 0; }
.canvas { flex: 1; min-height: 0; overflow: hidden; }
.layouts { display: flex; flex: none; height: 22px; padding-top: 2px; background: #cdd5df; }
.pager { display: flex; }
.pager button { display: grid; place-items: center; width: 20px; height: 20px; border: 1px solid #999; background: #fafafa; }
.pager svg { width: 12px; height: 12px; fill: #858585; stroke: none; }
.layout {
  position: relative;
  width: 83px;
  height: 20px;
  margin: 0 0 0 1px;
  clip-path: polygon(0 0, 100% 0, calc(100% - 12px) 100%, 9px 100%);
  background: #808080;
}
.layout::before {
  content: "";
  position: absolute;
  inset: 1px 2px;
  clip-path: polygon(0 0, 100% 0, calc(100% - 11px) 100%, 8px 100%);
  background: #b5b5b5;
}
.layout.current::before { background: #fff; }
.layout span { position: relative; padding-right: 4px; }

.mark { position: absolute; right: 82px; bottom: 0; stroke: none; pointer-events: none; }
.mark .bai { font: 700 64px "Liberation Sans", sans-serif; stroke: #b3b3b3; stroke-width: 2; }
.mark .du { font: 700 40px "Liberation Sans", sans-serif; fill: #000; }
.mark .exp { font: 900 48px "Noto Sans CJK SC", sans-serif; }
.mark .url { font: 34px "Open Sans", sans-serif; fill: #fffc; stroke: #ffffff88; stroke-width: 1; }

/* status bar */
.status {
  display: flex;
  flex: none;
  height: 31px;
  padding: 2px 13px 0 10px;
  border-bottom: 1px solid #101030;
  margin-bottom: 1px;
  background: #e0e0e0;
}
.status > * { flex: none; }
.brand { display: flex; align-items: center; gap: 9px; width: 141px; height: 26px; color: #666; }
.brand svg { width: 24px; height: 24px; stroke: none; }
.brand span { padding-bottom: 2px; }
.cmd-list {
  display: flex;
  align-items: center;
  justify-content: center;
  gap: 4px;
  width: 108px;
  height: 25px;
  margin-top: 1px;
  border: 1px solid #999;
  background: linear-gradient(#f4f4f4, #dadada);
  font-size: 15px;
  color: #555;
}
.cmd-list svg { width: 12px; height: 15px; }
.cmd, .find { display: flex; height: 23px; margin: 3px 0 0; }
.cmd { margin-left: 13px; }
.find { margin-left: auto; }
.status input { height: 23px; padding: 0 1px 6px; border: 1px solid #777; border-radius: 0; background: #f0f0f0; }
.status input::placeholder { color: #808080; opacity: 1; }
.cmd input { width: 322px; }
.cmd button { width: 92px; margin-left: -1px; border: 1px solid #777; background: #ccc; }
.find input { width: 149px; }
.find button { display: grid; place-items: center; width: 34px; margin-left: -1px; border: 1px solid #888; background: linear-gradient(#f8f8f8, #dcdcdc); }
.find svg { width: 16px; height: 16px; }
.modes { display: flex; gap: 6px; margin-left: 8px; }
.modes button { display: grid; place-items: center; width: 28px; height: 28px; }
.modes .on { border: 1px solid #c6912f; border-radius: 2px; background: linear-gradient(#ffd78e 50%, #ffc14d 52%, #ffd37c); }
.modes svg { width: 26px; height: 26px; }
```
